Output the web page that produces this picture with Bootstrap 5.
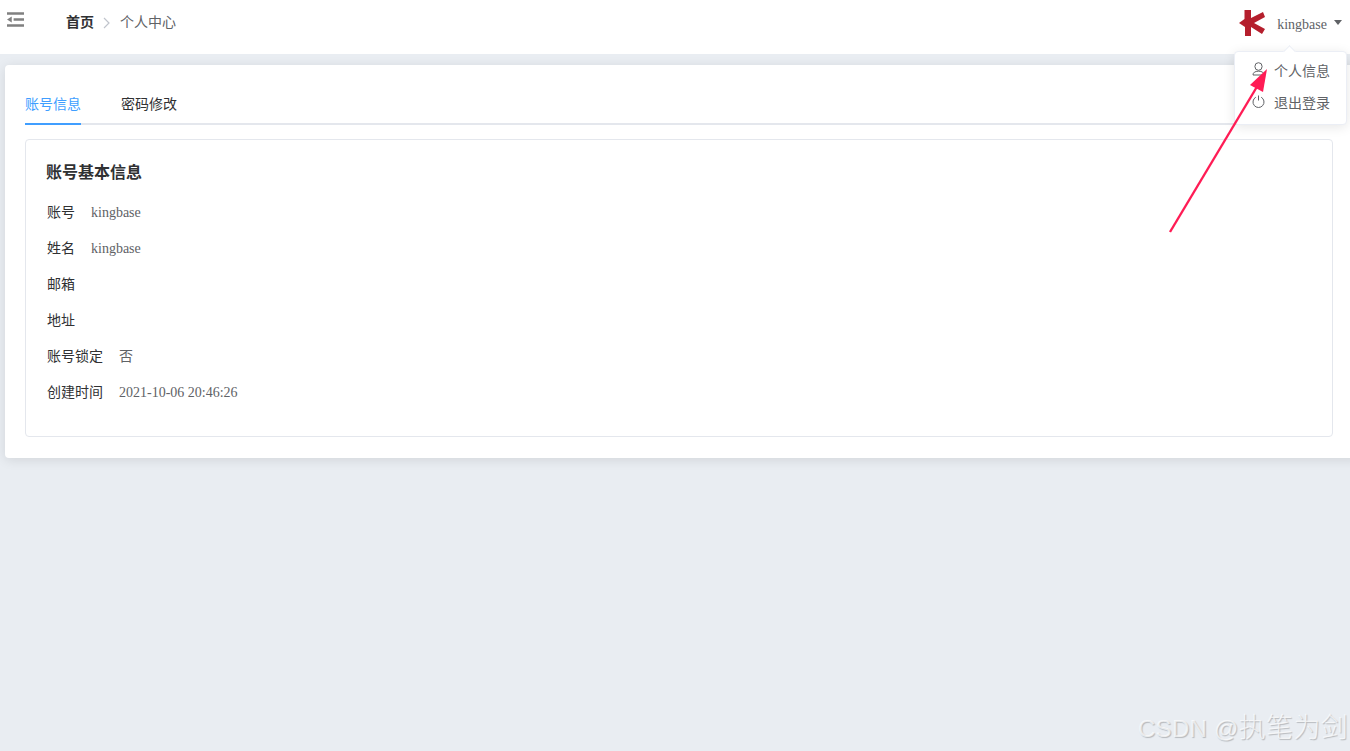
<!DOCTYPE html>
<html lang="zh-CN">
  <head>
    <meta charset="UTF-8" />
    <meta name="viewport" content="width=device-width, initial-scale=1.0" />
    <title>个人中心</title>
    <link
      href="https://cdn.jsdelivr.net/npm/bootstrap@5.3.0/dist/css/bootstrap.min.css"
      rel="stylesheet"
    />
    <style>
      html, body {
        height: 100%;
        overflow: hidden;
      }
      body {
        background-color: #e9edf2;
        font-family: "Liberation Serif", "Noto Sans CJK SC", serif;
        font-size: 14px;
        color: #303133;
      }
      .top-bar {
        height: 54px;
        background-color: #fff;
      }
      .menu-toggle {
        width: 17px;
        margin: 12px 0 0 7px;
        align-self: flex-start;
      }
      .crumbs {
        margin: 14px 0 0 42px;
        line-height: 17px;
        align-self: flex-start;
      }
      .crumbs b {
        color: #303133;
      }
      .crumbs span {
        color: #606266;
      }
      .crumb-sep {
        margin: 0 10px 0 9px;
        width: 7px;
      }
      .user-box {
        margin: 9px 8px 0 0;
        align-self: flex-start;
        color: #606266;
      }
      .user-name {
        margin: 3px 7px 0 11px;
      }
      .caret-down {
        width: 0;
        height: 0;
        border-left: 4.5px solid transparent;
        border-right: 4.5px solid transparent;
        border-top: 5px solid #606266;
        margin-top: -1px;
      }
      .user-menu {
        position: absolute;
        top: 51px;
        left: 1234px;
        width: 113px;
        height: 74px;
        background-color: #fff;
        border: 1px solid #ebeef5;
        border-radius: 4px;
        box-shadow: 0 2px 12px rgba(0, 0, 0, 0.1);
        padding: 3px 0 0 17px;
        color: #606266;
        z-index: 5;
      }
      .user-menu::before {
        content: "";
        position: absolute;
        top: -5px;
        left: 50px;
        width: 9px;
        height: 9px;
        background-color: #fff;
        border-left: 1px solid #ebeef5;
        border-top: 1px solid #ebeef5;
        transform: rotate(45deg);
      }
      .menu-row {
        height: 32px;
        gap: 9px;
      }
      .icon-user {
        margin-top: -4px;
      }
      .icon-power {
        margin-top: -3px;
      }
      .page-body {
        padding: 11px 0 0 5px;
      }
      .main-panel {
        height: 393px;
        margin-right: -10px;
        background-color: #fff;
        border: 0;
        border-radius: 4px;
        box-shadow: 0 2px 12px rgba(0, 0, 0, 0.1);
        padding: 20px 27px 21px 20px;
      }
      .tab-strip {
        height: 40px;
        border-bottom: 2px solid #e4e7ed;
        gap: 40px;
      }
      .tab-item {
        height: 40px;
        line-height: 39px;
        color: #303133;
      }
      .tab-item.is-active {
        color: #409eff;
        border-bottom: 2px solid #409eff;
      }
      .info-box {
        height: 298px;
        margin-top: 14px;
        border: 1px solid #e4e7ed;
        border-radius: 4px;
        padding: 21px 20px;
      }
      .info-title {
        font-size: 16px;
        font-weight: 700;
        line-height: 24px;
        margin-bottom: 9px;
        color: #303133;
      }
      .info-row {
        height: 36px;
        gap: 16px;
        padding-left: 1px;
      }
      .info-row span {
        color: #606266;
      }
      .pointer-arrow {
        position: absolute;
        left: 0;
        top: 0;
        z-index: 6;
        pointer-events: none;
      }
      .watermark {
        position: absolute;
        right: 2px;
        bottom: 6px;
        font-family: "Liberation Sans", "Noto Sans CJK SC", sans-serif;
        font-size: 24px;
        font-weight: 300;
        line-height: 32px;
        letter-spacing: 0.3px;
        color: rgba(255, 255, 255, 0.7);
        text-shadow: 1px 1px 1px rgba(0, 0, 0, 0.22);
        z-index: 7;
      }
      .watermark span {
        font-size: 27px;
      }
    </style>
  </head>
  <body class="position-relative">
    <header class="top-bar d-flex align-items-center">
      <svg class="menu-toggle" viewBox="0 0 18 15" height="15" preserveAspectRatio="none">
        <path d="M0 1.5h18M7 7.5h11M0 13.5h18" stroke="#808080" stroke-width="2.6" fill="none" />
        <path d="M0 7.5 5 4.5v6z" fill="#808080" />
      </svg>
      <div class="crumbs d-flex align-items-center">
        <b>首页</b>
        <svg class="crumb-sep" viewBox="0 0 7 12" height="12">
          <path d="M1 1l5 5-5 5" stroke="#c0c4cc" stroke-width="1.2" fill="none" />
        </svg>
        <span>个人中心</span>
      </div>
      <div class="user-box d-flex align-items-center ms-auto">
        <svg width="27" height="28" viewBox="0 0 27 28">
          <path d="M5.500 1H12v8l12-6 2 5-11 6 11 6-3 5-11-7v9H6v-9L0 14l5.500-4z" fill="#b51f2d" />
        </svg>
        <div class="user-name">kingbase</div>
        <div class="caret-down"></div>
      </div>
    </header>

    <div class="user-menu">
      <div class="menu-row d-flex align-items-center">
        <svg class="icon-user" width="13" height="14" viewBox="0 0 13 14" fill="none" stroke="#606266">
          <ellipse cx="6.500" cy="4.500" rx="3.600" ry="3.800" />
          <path d="M1 13c0-2.500 2-3.800 5.500-3.800S12 10.500 12 13z" />
        </svg>
        <div>个人信息</div>
      </div>
      <div class="menu-row d-flex align-items-center">
        <svg class="icon-power" width="13" height="13" viewBox="0 0 13 13" fill="none" stroke="#606266">
          <path d="M3.800 2.200a5.500 5.500 0 1 0 5.400 0M6.500 0.500v5" />
        </svg>
        <div>退出登录</div>
      </div>
    </div>

    <main class="page-body">
      <section class="main-panel">
        <div class="tab-strip d-flex">
          <div class="tab-item is-active">账号信息</div>
          <div class="tab-item">密码修改</div>
        </div>
        <div class="info-box">
          <div class="info-title">账号基本信息</div>
          <div class="info-row d-flex align-items-center">账号<span>kingbase</span></div>
          <div class="info-row d-flex align-items-center">姓名<span>kingbase</span></div>
          <div class="info-row d-flex align-items-center">邮箱</div>
          <div class="info-row d-flex align-items-center">地址</div>
          <div class="info-row d-flex align-items-center">账号锁定<span>否</span></div>
          <div class="info-row d-flex align-items-center">创建时间<span>2021-10-06 20:46:26</span></div>
        </div>
      </section>
    </main>

    <svg class="pointer-arrow" width="1350" height="751" viewBox="0 0 1350 751">
      <path d="M1170 232 1258 85" stroke="#ff1c55" stroke-width="2.400" fill="none" />
      <path d="M1267 69 1263 92 1250 85z" fill="#ff1c55" />
    </svg>
    <div class="watermark">CSDN @<span>执笔为剑</span></div>

    <script src="https://cdn.jsdelivr.net/npm/bootstrap@5.3.0/dist/js/bootstrap.bundle.min.js"></script>
  </body>
</html>
